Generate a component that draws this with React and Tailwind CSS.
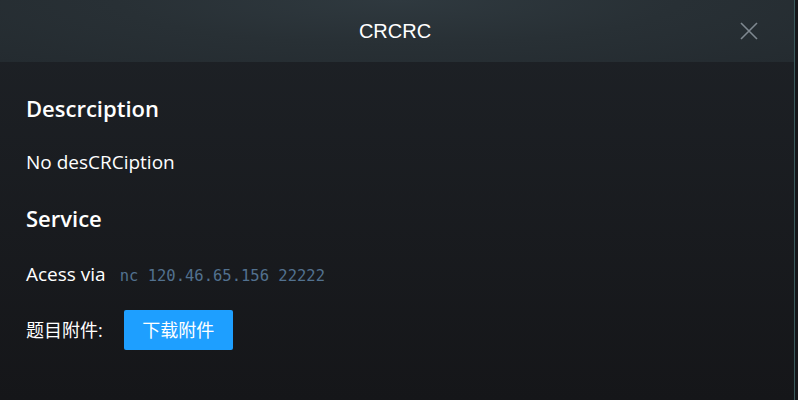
import React from 'react';

export default function App() {
  return (
    <div className="w-[798px] h-[400px] flex bg-[#16171a] overflow-hidden" style={{ fontFamily: '"Open Sans", "Noto Sans CJK SC", sans-serif' }}>
      <div className="w-[794px] h-full flex flex-col bg-gradient-to-b from-[#1e2227] to-[#151619]">
        {/* Header */}
        <div className="relative h-[62px] shrink-0 flex items-center justify-center bg-[radial-gradient(ellipse_at_top,#2f393f_0%,#283035_50%,#242b30_100%)]">
          <h3 className="text-[20px] text-white -ml-[4px]" style={{ fontFamily: '"Liberation Sans", Arial, sans-serif' }}>CRCRC</h3>
          <button className="absolute right-[36px] top-[22px] text-[#7f8890]">
            <svg width="18" height="18" viewBox="0 0 18 18" fill="none" stroke="currentColor" strokeWidth="1.6">
              <path d="M1 1 L17 17 M17 1 L1 17" />
            </svg>
          </button>
        </div>

        {/* Body */}
        <div className="px-[26px] pt-[30px] text-white">
          <h2 className="text-[22px] font-semibold leading-[32px]">Descrciption</h2>
          <p className="text-[19px] leading-[28px] mt-[24px]">No desCRCiption</p>
          <h2 className="text-[22px] font-semibold leading-[32px] mt-[26px]">Service</h2>
          <div className="flex items-baseline mt-[26px] leading-[28px]">
            <span className="text-[19px]">Acess via</span>
            <code className="ml-[14px] text-[15.5px] text-[#52718f]" style={{ fontFamily: '"DejaVu Sans Mono", monospace' }}>nc 120.46.65.156 22222</code>
          </div>
          <div className="flex items-center mt-[20px]">
            <span className="text-[18px]">题目附件:</span>
            <button className="ml-[21px] w-[109px] h-[40px] rounded-[2px] bg-[#1e9fff] text-white text-[18px]">下载附件</button>
          </div>
        </div>
      </div>
      <div className="w-px h-full bg-[#3b5a5d]" />
      <div className="flex-1 bg-[#16171a]" />
    </div>
  );
}
